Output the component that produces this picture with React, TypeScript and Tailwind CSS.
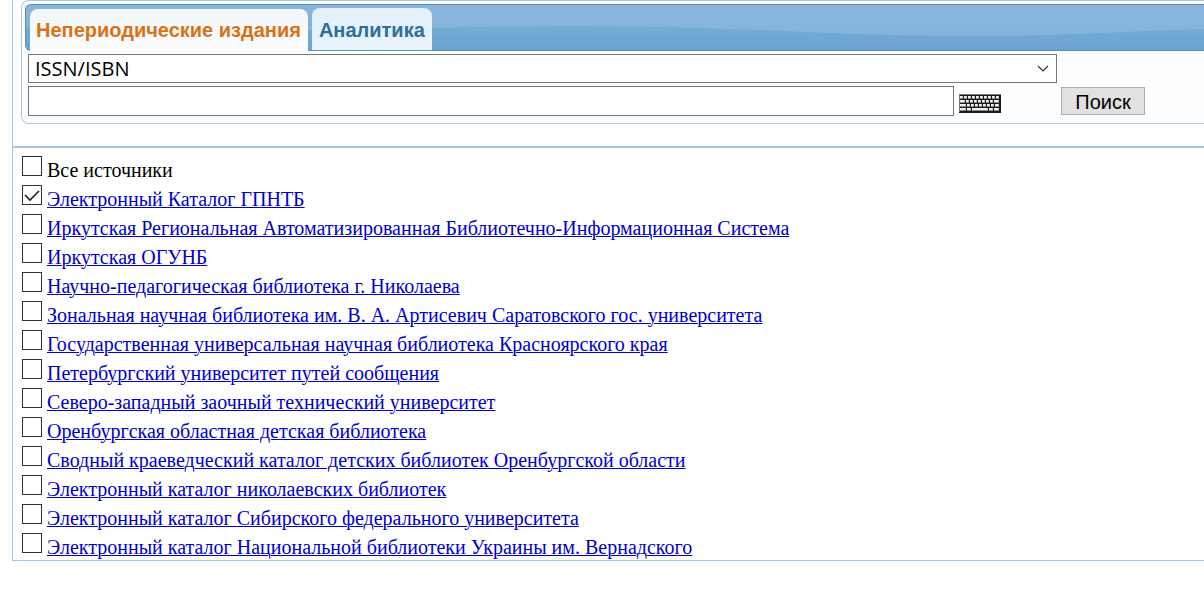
import { useState } from "react";

interface Source {
  id: string;
  title: string;
}

const TABS = ["Непериодические издания", "Аналитика"];

const SOURCES: Source[] = [
  { id: "gpntb", title: "Электронный Каталог ГПНТБ" },
  { id: "irbis", title: "Иркутская Региональная Автоматизированная Библиотечно-Информационная Система" },
  { id: "ogunb", title: "Иркутская ОГУНБ" },
  { id: "nikolaev", title: "Научно-педагогическая библиотека г. Николаева" },
  { id: "saratov", title: "Зональная научная библиотека им. В. А. Артисевич Саратовского гос. университета" },
  { id: "krasnoyarsk", title: "Государственная универсальная научная библиотека Красноярского края" },
  { id: "peterburg", title: "Петербургский университет путей сообщения" },
  { id: "sztu", title: "Северо-западный заочный технический университет" },
  { id: "orenburg", title: "Оренбургская областная детская библиотека" },
  { id: "orenburg-kray", title: "Сводный краеведческий каталог детских библиотек Оренбургской области" },
  { id: "nikolaev-cat", title: "Электронный каталог николаевских библиотек" },
  { id: "sfu", title: "Электронный каталог Сибирского федерального университета" },
  { id: "vernadsky", title: "Электронный каталог Национальной библиотеки Украины им. Вернадского" },
];

const App = () => {
  const [tab, setTab] = useState(0);
  const [query, setQuery] = useState("");
  const [selected, setSelected] = useState<string[]>(["gpntb"]);

  const toggle = (id: string) =>
    setSelected((prev) => (prev.includes(id) ? prev.filter((x) => x !== id) : [...prev, id]));

  const allSelected = selected.length === SOURCES.length;

  return (
    <main className="overflow-hidden bg-white text-black">
      <div className="ml-3 border-b border-l border-[#a0c8ec]">
        <section className="ml-2 rounded-l-lg border-y border-l border-[#a6c9e2] bg-[#fefefe] pt-[3px] pb-[7px] pl-[3px]">
          <div role="tablist" className="relative flex h-[47px] gap-1 rounded-l-md border-y border-l border-[#4f92bf] bg-linear-to-b from-[#8ab6dc] to-[#82b2d8] pt-[3px] pl-1">
            <TabWave />
            {TABS.map((title, idx) => (
              <button
                key={title}
                type="button"
                role="tab"
                aria-selected={tab === idx}
                onClick={() => setTab(idx)}
                className={`relative rounded-t-lg font-['Liberation_Sans',Arial,sans-serif] text-xl font-bold whitespace-nowrap ${
                  tab === idx
                    ? "mt-px -mb-0.5 bg-linear-to-b from-[#f3f7f9] to-[#fcfdfd] pr-[7px] pb-0.5 pl-1.5 text-[#db7116]"
                    : "bg-linear-to-b from-[#e3effa] to-[#e9f4fc] px-[7px] pt-0.5 text-[#2e6e9e]"
                }`}
              >
                {title}
              </button>
            ))}
          </div>

          <form
            onSubmit={(e) => e.preventDefault()}
            className="mt-[3px] mr-[59px] ml-[3px] grid grid-cols-[minmax(0,1fr)_84px] items-center gap-x-1 gap-y-[3px]"
          >
            <div className="relative">
              <select
                aria-label="Поле поиска"
                className="block h-[29px] w-full appearance-none border border-[#767676] bg-white px-1.5 font-['Open_Sans','Noto_Sans',sans-serif] text-xl leading-[26px]"
              >
                <option>ISSN/ISBN</option>
              </select>
              <svg viewBox="0 0 12 7" className="pointer-events-none absolute top-[11px] right-2 h-[7px] w-3" fill="none" stroke="#333" strokeWidth="1.2">
                <path d="M1 1l5 5 5-5" />
              </svg>
            </div>
            <div className="col-start-1 flex items-center gap-[5px] pr-14">
              <input
                type="text"
                aria-label="Поисковый запрос"
                value={query}
                onChange={(e) => setQuery(e.target.value)}
                className="h-[30px] min-w-0 flex-1 border border-[#767676] bg-white px-1.5 font-['Liberation_Sans',Arial,sans-serif] text-xl"
              />
              <button type="button" aria-label="Экранная клавиатура" className="mt-1 shrink-0">
                <KeyboardIcon />
              </button>
            </div>
            <button type="submit" className="h-7 border border-[#adadad] bg-[#e1e1e1] pt-0.5 font-['Liberation_Sans',Arial,sans-serif] text-xl leading-6">
              Поиск
            </button>
          </form>
        </section>

        <div className="mt-[22px] border-t-2 border-[#a0c8ec] pt-1.5 pl-[9px] font-['Liberation_Serif','Times_New_Roman',serif] text-xl">
          <div className="flex h-[29px] gap-[5px]">
            <Checkbox
              id="all"
              checked={allSelected}
              onChange={() => setSelected(allSelected ? [] : SOURCES.map((s) => s.id))}
            />
            <label htmlFor="all" className="pt-0.5 whitespace-nowrap">Все источники</label>
          </div>
          {SOURCES.map((source) => (
            <div key={source.id} className="flex h-[29px] gap-[5px]">
              <Checkbox
                id={source.id}
                label={source.title}
                checked={selected.includes(source.id)}
                onChange={() => toggle(source.id)}
              />
              <a href={`#${source.id}`} className="pt-0.5 whitespace-nowrap text-[#0000cc] underline decoration-1 underline-offset-1">
                {source.title}
              </a>
            </div>
          ))}
        </div>
      </div>
    </main>
  );
};

export default App;

interface CheckboxProps {
  id: string;
  label?: string;
  checked: boolean;
  onChange: () => void;
}

function Checkbox({ id, label, checked, onChange }: CheckboxProps) {
  return (
    <span className="relative mt-0.5 size-5 shrink-0">
      <input
        id={id}
        type="checkbox"
        aria-label={label}
        checked={checked}
        onChange={onChange}
        className="block size-5 appearance-none border border-[#333] bg-white"
      />
      {checked && (
        <svg viewBox="0 0 20 20" className="pointer-events-none absolute inset-0 size-5" fill="none" stroke="#222" strokeWidth="1.6">
          <path d="M3 10l5 5 9-9" />
        </svg>
      )}
    </span>
  );
}

function TabWave() {
  return (
    <svg className="absolute inset-0 h-full w-full rounded-l-md" aria-hidden="true">
      <defs>
        <linearGradient id="wave" x1="0" y1="0" x2="0" y2="1">
          <stop offset="0" stopColor="#76acd4" />
          <stop offset="1" stopColor="#6ba2d1" />
        </linearGradient>
        <pattern id="waves" width="1400" height="45" patternUnits="userSpaceOnUse">
          <path d="M0 22C150 27 300 25 406 23 500 21 600 20 734 25 800 28 870 31 950 31 1060 31 1120 24 1230 23 1300 22 1350 22 1400 22V45H0Z" fill="url(#wave)" />
        </pattern>
      </defs>
      <rect width="100%" height="45" fill="url(#waves)" />
    </svg>
  );
}

function KeyboardIcon() {
  const rows = [
    { y: 2, keys: [1, 5, 9, 13, 17, 21, 25, 29, 33, 37] },
    { y: 6, keys: [1, 7, 11, 15, 19, 23, 27, 31, 35] },
    { y: 10, keys: [1, 8, 12, 16, 20, 24, 28, 32, 36] },
    { y: 14, keys: [1, 8, 13, 30, 35] },
  ];
  return (
    <svg viewBox="0 0 42 19" className="block h-[19px] w-[42px]" shapeRendering="crispEdges">
      <rect width="42" height="19" fill="#1a1a1a" />
      <path d="M0 0h42v1H1v17H0z" fill="#777" />
      {rows.map(({ y, keys }) =>
        keys.map((x, i) => {
          const width = (keys[i + 1] ?? 41) - x - 1;
          return (
            <g key={`${y}-${x}`}>
              <rect x={x} y={y} width={width} height="3" fill="#8a8a8a" />
              <rect x={x} y={y} width={width} height="2" fill="#c4c4c4" />
              <rect x={x} y={y} width={width - 1} height="2" fill="#f0f0f0" />
            </g>
          );
        }),
      )}
    </svg>
  );
}
